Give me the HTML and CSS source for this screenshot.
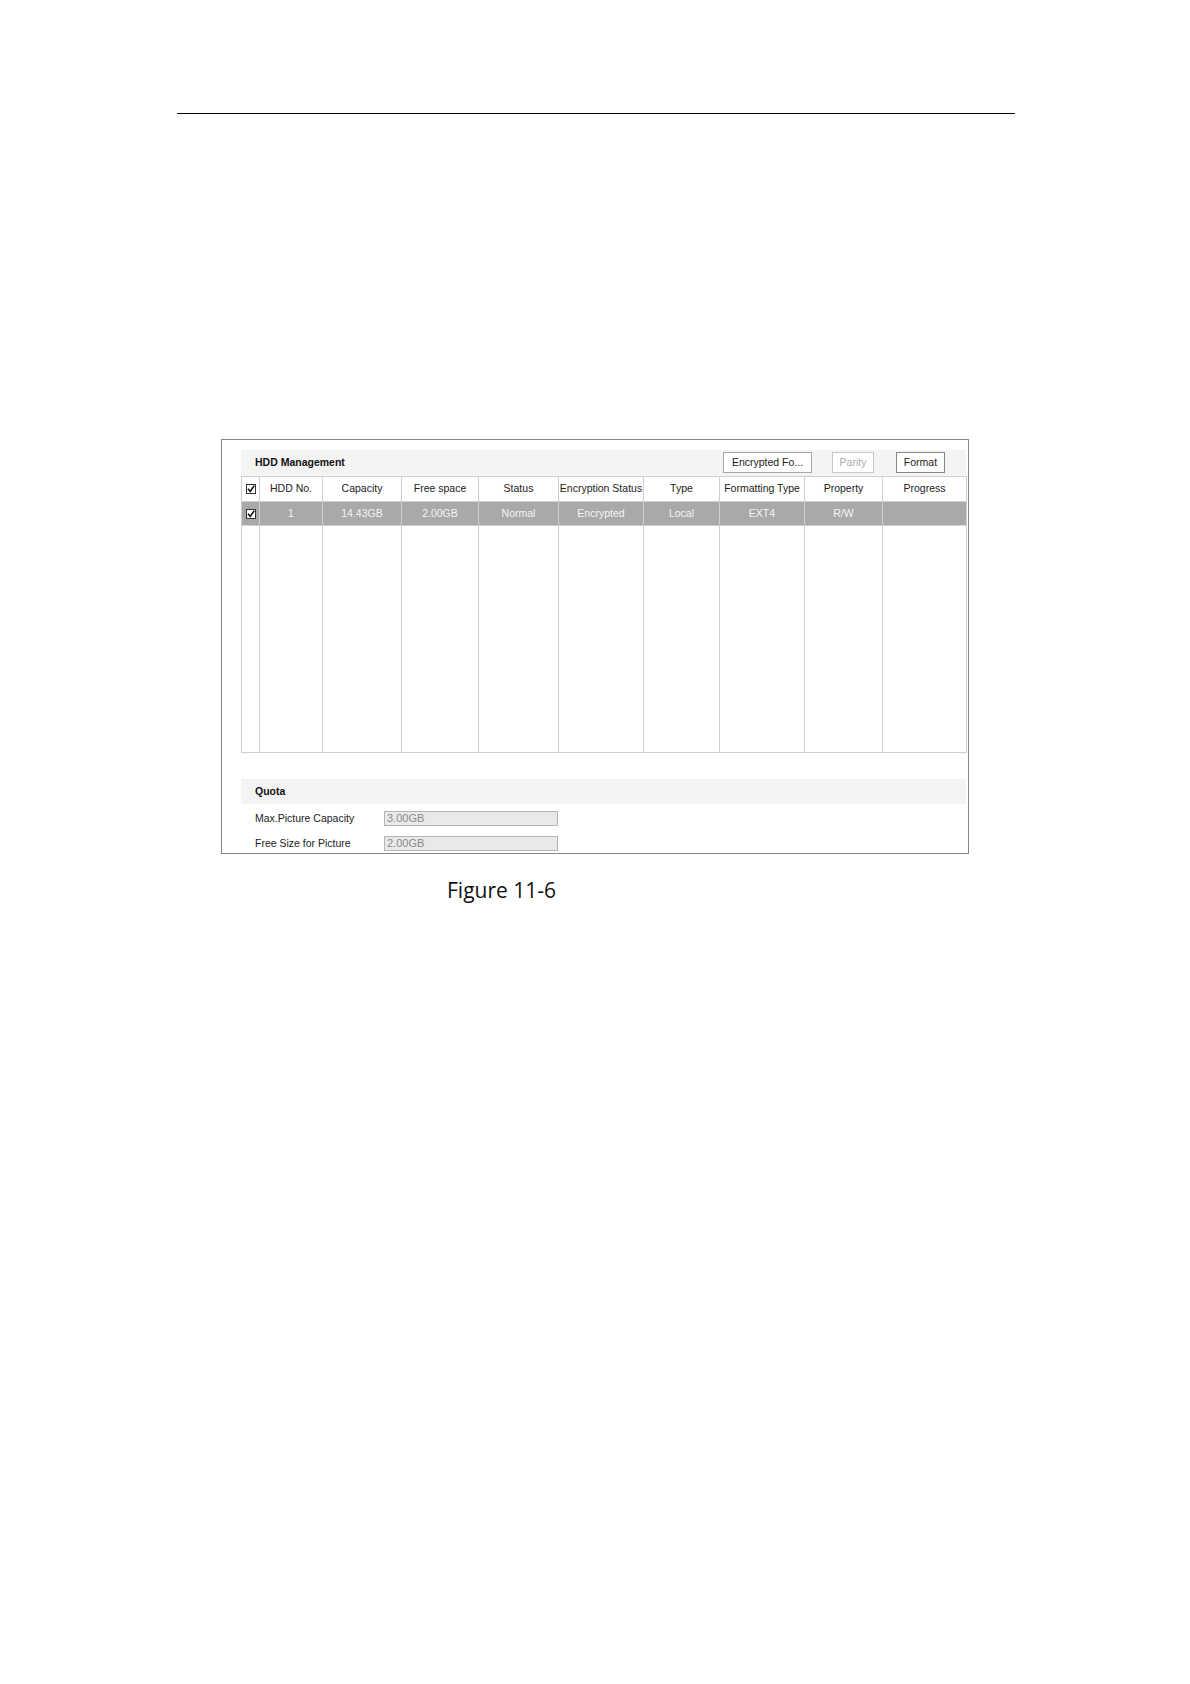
FILE: index.html
```html
<!DOCTYPE html>
<html>
<head>
<meta charset="utf-8">
<link rel="stylesheet" href="styles.css">
</head>
<body>
<div class="rule"></div>
<div class="shot">
  <div class="bar">
    <span class="bar-title">HDD Management</span>
    <div class="bar-buttons">
      <span class="btn btn-enc">Encrypted Fo...</span>
      <span class="btn btn-parity">Parity</span>
      <span class="btn btn-format">Format</span>
    </div>
  </div>
  <table class="grid">
    <colgroup>
      <col style="width:18px"><col style="width:63px"><col style="width:79px"><col style="width:77px"><col style="width:80px"><col style="width:85px"><col style="width:76px"><col style="width:85px"><col style="width:78px"><col style="width:84px">
    </colgroup>
    <tr class="head">
      <td><svg class="cb" width="10" height="10" viewBox="0 0 10 10"><rect x="0.5" y="0.5" width="9" height="9" fill="#fff" stroke="#333"/><path d="M2 4.8 L4.2 7.4 L8.3 1.6" fill="none" stroke="#111" stroke-width="1.6"/></svg></td>
      <td>HDD No.</td><td>Capacity</td><td>Free space</td><td>Status</td><td>Encryption Status</td><td>Type</td><td>Formatting Type</td><td>Property</td><td>Progress</td>
    </tr>
    <tr class="sel">
      <td><svg class="cb" width="10" height="10" viewBox="0 0 10 10"><rect x="0.5" y="0.5" width="9" height="9" fill="#fff" stroke="#333"/><path d="M2 4.8 L4.2 7.4 L8.3 1.6" fill="none" stroke="#111" stroke-width="1.6"/></svg></td>
      <td>1</td><td>14.43GB</td><td>2.00GB</td><td>Normal</td><td>Encrypted</td><td>Local</td><td>EXT4</td><td>R/W</td><td></td>
    </tr>
    <tr class="empty">
      <td></td><td></td><td></td><td></td><td></td><td></td><td></td><td></td><td></td><td></td>
    </tr>
  </table>
  <div class="bar quota-bar">
    <span class="bar-title">Quota</span>
  </div>
  <div class="field first">
    <span class="label">Max.Picture Capacity</span>
    <span class="input">3.00GB</span>
  </div>
  <div class="field">
    <span class="label">Free Size for Picture</span>
    <span class="input">2.00GB</span>
  </div>
</div>
<div class="caption">Figure 11-6</div>
</body>
</html>
```
FILE: styles.css
```css
html, body {
  margin: 0;
  padding: 0;
  background: #fff;
}
body {
  font-family: "Liberation Sans", Arial, sans-serif;
  width: 1190px;
  min-height: 1684px;
}
.rule {
  margin: 113px 0 0 177px;
  width: 838px;
  height: 1px;
  background: #000;
}
.shot {
  box-sizing: border-box;
  margin: 325px 0 0 221px;
  width: 748px;
  border: 1px solid #858585;
  padding: 10px 2px 2px 19px;
}
.bar {
  box-sizing: border-box;
  width: 725px;
  height: 26px;
  background: #f4f4f4;
  display: flex;
  align-items: center;
  justify-content: space-between;
  padding: 0 21px 2px 14px;
}
.bar-title {
  font-weight: bold;
  font-size: 10.5px;
  color: #111;
}
.bar-buttons {
  display: flex;
  align-items: center;
}
.btn {
  box-sizing: border-box;
  height: 21px;
  display: flex;
  align-items: center;
  justify-content: center;
  padding-bottom: 1px;
  background: #fff;
  border: 1px solid #a8a8a8;
  font-size: 10.5px;
  color: #222;
}
.btn-enc { width: 89px; }
.btn-parity { width: 42px; margin-left: 20px; color: #aaa; border-color: #c8c8c8; }
.btn-format { width: 49px; margin-left: 22px; border-color: #888; }
.grid {
  border-collapse: collapse;
  table-layout: fixed;
  width: 725px;
  font-size: 10.5px;
  color: #222;
}
.grid td {
  border: 1px solid #cfcfcf;
  padding: 0;
  text-align: center;
  white-space: nowrap;
  overflow: hidden;
}
.grid .head td { height: 22px; padding-bottom: 2px; }
.grid .sel td {
  height: 21px;
  padding-bottom: 2px;
  background: #a9a9a9;
  color: #f4f4f4;
}
.grid .empty td { height: 226px; }
.cb { display: block; margin: 2px auto 0 auto; }
.quota-bar {
  margin-top: 26px;
  height: 25px;
}
.field {
  display: flex;
  align-items: center;
  height: 15px;
  margin-top: 10px;
  padding-left: 14px;
  font-size: 10.5px;
  color: #222;
}
.field.first { margin-top: 7px; }
.label { width: 129px; margin-top: -1px; }
.input {
  box-sizing: border-box;
  width: 174px;
  height: 15px;
  background: #e9e9e9;
  border: 1px solid #b5b5b5;
  color: #8a8a8a;
  font-size: 11px;
  line-height: 13px;
  padding-left: 2px;
}
.caption {
  margin: 22px 0 0 447px;
  font-family: "Open Sans", "Noto Sans", sans-serif;
  font-size: 21px;
  line-height: 28px;
  color: #111;
}
```
